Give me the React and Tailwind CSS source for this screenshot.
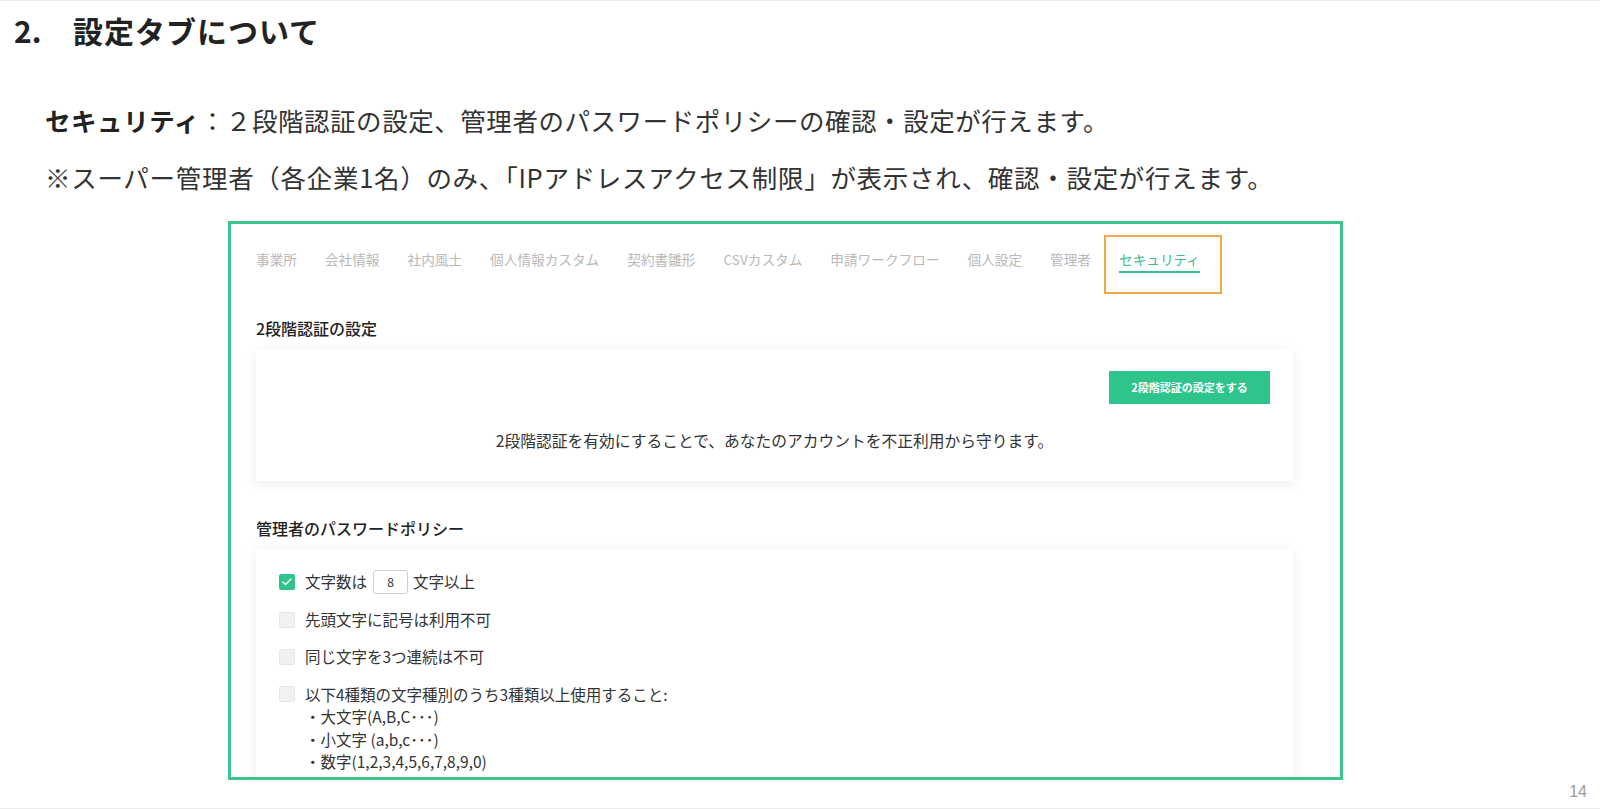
import { Check } from 'lucide-react';

const jp = { fontFamily: '"Noto Sans CJK JP", "Noto Sans", sans-serif' };

const tabs = ['事業所', '会社情報', '社内風土', '個人情報カスタム', '契約書雛形', 'CSVカスタム', '申請ワークフロー', '個人設定', '管理者'];

function Box({ checked, className = '' }) {
  if (checked) {
    return (
      <span className={`w-4 h-4 shrink-0 rounded-[2px] bg-[#2fc48c] flex items-center justify-center ${className}`}>
        <Check size={12} strokeWidth={3} className="text-white" />
      </span>
    );
  }
  return <span className={`w-4 h-4 shrink-0 rounded-[2px] bg-[#f1f1f1] border border-[#e6e6e6] ${className}`} />;
}

export default function App() {
  return (
    <div className="w-[1600px] h-[809px] bg-white border-t border-b border-[#ebebeb] overflow-hidden flex flex-col text-[#333]" style={jp}>
      <h1 className="pt-[11px] pl-[14px] text-[30px] leading-[36px] font-bold text-[#222] flex">
        <span className="w-[59px]">2.</span>
        <span className="tracking-[1px]">設定タブについて</span>
      </h1>

      <div className="mt-[43px] pl-[45px] text-[25.5px] leading-[57px]">
        <p className="tracking-[0.55px]"><span className="font-bold text-[#222]">セキュリティ</span>：２段階認証の設定、管理者のパスワードポリシーの確認・設定が行えます。</p>
        <p className="tracking-[0.7px]">※スーパー管理者（各企業1名）のみ、「IPアドレスアクセス制限」が表示され、確認・設定が行えます。</p>
      </div>

      <div className="mt-[16px] ml-[228px] w-[1115px] h-[559px] shrink-0 border-[3px] border-[#3bc48e] overflow-hidden pl-[25px]">
        <div className="pt-[25px] flex items-center gap-[28px] text-[13.65px] leading-[20px] text-[#b9b9b9]">
          {tabs.map(t => <span key={t}>{t}</span>)}
          <span className="relative text-[#3bbd8b]">
            セキュリティ
            <span className="absolute left-0 right-0 top-[22px] h-[2px] bg-[#3bbd8b]" />
            <span className="absolute -left-[15px] -right-[22px] -top-[14px] -bottom-[25px] border-2 border-[#f2a849]" />
          </span>
        </div>

        <h2 className="mt-[47px] text-[16px] leading-[24px] font-medium text-[#222]">2段階認証の設定</h2>
        <div className="mt-[9px] w-[1037px] h-[132px] bg-white shadow-[0_3px_12px_rgba(0,0,0,0.08)] flex flex-col items-center pt-[22px]">
          <div className="self-end mr-[23px]">
            <button className="w-[161px] h-[33px] bg-[#2fc48c] text-white text-[11px] font-bold">2段階認証の設定をする</button>
          </div>
          <p className="mt-[25px] text-[15.75px] leading-[24px]">2段階認証を有効にすることで、あなたのアカウントを不正利用から守ります。</p>
        </div>

        <h2 className="mt-[35px] text-[16px] leading-[24px] font-medium text-[#222]">管理者のパスワードポリシー</h2>
        <div className="mt-[9px] w-[1037px] h-[300px] bg-white shadow-[0_2px_12px_rgba(0,0,0,0.08)] pt-[21px] pl-[23px] text-[15.5px] flex flex-col gap-[13.5px]">
          <div className="flex items-center h-[24px]">
            <Box checked />
            <span className="ml-[10px]">文字数は</span>
            <span className="ml-[6px] w-[35px] h-[24px] border border-[#cfcfcf] rounded-[3px] flex items-center justify-center text-[12px]">8</span>
            <span className="ml-[5px]">文字以上</span>
          </div>
          <div className="flex items-center h-[24px]">
            <Box />
            <span className="ml-[10px]">先頭文字に記号は利用不可</span>
          </div>
          <div className="flex items-center h-[24px]">
            <Box />
            <span className="ml-[10px]">同じ文字を3つ連続は不可</span>
          </div>
          <div className="flex items-start leading-[22.5px]">
            <Box className="mt-[3px]" />
            <div className="ml-[10px]">
              <p>以下4種類の文字種別のうち3種類以上使用すること:</p>
              <p>・大文字(A,B,C･･･)</p>
              <p>・小文字 (a,b,c･･･)</p>
              <p>・数字(1,2,3,4,5,6,7,8,9,0)</p>
            </div>
          </div>
        </div>
      </div>

      <div className="flex justify-end pr-[13px] mt-[4px] text-[16px] leading-[16px] text-[#9a9a9a]" style={{ fontFamily: '"Liberation Sans", sans-serif' }}>14</div>
    </div>
  );
}
